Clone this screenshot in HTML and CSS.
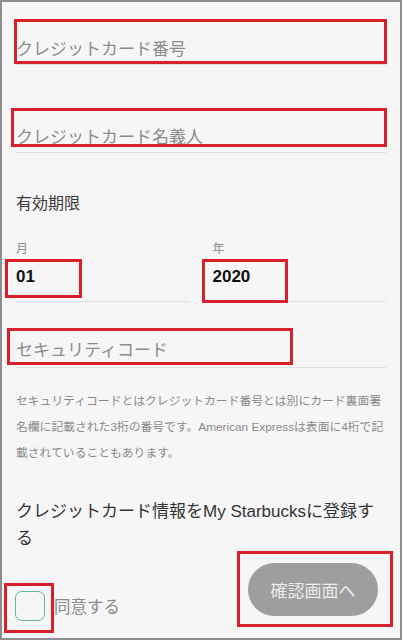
FILE: index.html
```html
<!DOCTYPE html>
<html lang="ja">
<head>
<meta charset="utf-8">
<title>クレジットカード登録</title>
<link rel="stylesheet" href="styles.css">
</head>
<body>
<div class="shot">
  <div class="frame">
    <div class="field field-number"><span class="placeholder">クレジットカード番号</span></div>
    <div class="field field-name"><span class="placeholder">クレジットカード名義人</span></div>

    <div class="section-title">有効期限</div>
    <div class="expiry">
      <div class="expiry-col">
        <div class="mini-label">月</div>
        <div class="field field-select"><span class="value">01</span></div>
      </div>
      <div class="expiry-col">
        <div class="mini-label">年</div>
        <div class="field field-select"><span class="value">2020</span></div>
      </div>
    </div>

    <div class="field field-cvc"><span class="placeholder">セキュリティコード</span></div>

    <p class="note">セキュリティコードとはクレジットカード番号とは別にカード裏面署名欄に記載された3桁の番号です。American Expressは表面に4桁で記載されていることもあります。</p>

    <p class="register">クレジットカード情報をMy Starbucksに登録する</p>

    <div class="actions">
      <label class="agree">
        <span class="checkbox"></span>
        <span class="agree-text">同意する</span>
      </label>
      <button class="confirm" type="button">確認画面へ</button>
    </div>
  </div>

  <div class="mark mark-number"></div>
  <div class="mark mark-name"></div>
  <div class="mark mark-month"></div>
  <div class="mark mark-year"></div>
  <div class="mark mark-cvc"></div>
  <div class="mark mark-check"></div>
  <div class="mark mark-button"></div>
</div>
</body>
</html>
```

FILE: styles.css
```css
html, body {
  margin: 0;
  padding: 0;
  background: #f6f6f6;
}

.shot {
  position: relative;
  width: 402px;
  height: 640px;
  overflow: hidden;
  font-family: "Liberation Sans", "Noto Sans CJK JP", sans-serif;
}

.frame {
  box-sizing: border-box;
  width: 402px;
  height: 640px;
  border: 2px solid #8e8e8e;
  background: #f6f6f6;
  padding: 0 14px;
  overflow: hidden;
}

.field {
  border-bottom: 1px solid #e0e0e0;
  padding-bottom: 2px;
  line-height: 24px;
}

.placeholder {
  font-size: 17px;
  color: #8c8c8c;
}

.field-number {
  margin-top: 36px;
}

.field-name {
  margin-top: 61px;
}

.section-title {
  margin-top: 39px;
  font-size: 16px;
  line-height: 24px;
  color: #3a3a3a;
}

.expiry {
  display: grid;
  grid-template-columns: 1fr 1fr;
  column-gap: 23px;
  margin-top: 25px;
}

.mini-label {
  font-size: 12px;
  line-height: 16px;
  color: #8c8c8c;
}

.field-select {
  margin-top: 8px;
  padding-bottom: 12px;
}

.value {
  font-size: 17px;
  font-weight: bold;
  color: #111;
}

.field-cvc {
  margin-top: 37px;
  padding-bottom: 4px;
}

.note {
  margin: 20px -3px 0 0;
  font-size: 11.8px;
  line-height: 26px;
  color: #8a8a8a;
}

.register {
  margin: 32px 0 0;
  font-size: 17px;
  line-height: 27px;
  color: #333;
}

.actions {
  display: flex;
  justify-content: space-between;
  align-items: flex-start;
}

.agree {
  display: flex;
  align-items: center;
  gap: 9px;
  margin: 39px 0 0 -1px;
}

.checkbox {
  box-sizing: border-box;
  width: 30px;
  height: 30px;
  border: 1.5px solid #62b89b;
  border-radius: 7px;
  background: #f6f6f6;
}

.agree-text {
  font-size: 16.5px;
  color: #8a8a8a;
}

.confirm {
  margin: 11px 8px 0 0;
  width: 130px;
  height: 53px;
  border: none;
  border-radius: 27px;
  background: #9e9e9e;
  color: #ececec;
  font-family: "Liberation Sans", "Noto Sans CJK JP", sans-serif;
  font-size: 17px;
  padding: 0;
}

/* red annotation rectangles lying over the form */
.mark {
  position: absolute;
  box-sizing: border-box;
  border: 3px solid #d7202b;
}

.mark-number { left: 14px; top: 19px; width: 373px; height: 45px; }
.mark-name   { left: 11px; top: 108px; width: 376px; height: 39px; }
.mark-month  { left: 5px; top: 259px; width: 77px; height: 39px; }
.mark-year   { left: 202px; top: 259px; width: 86px; height: 44px; }
.mark-cvc    { left: 7px; top: 328px; width: 286px; height: 37px; }
.mark-check  { left: 4px; top: 583px; width: 50px; height: 50px; }
.mark-button { left: 237px; top: 551px; width: 156px; height: 76px; }
```
